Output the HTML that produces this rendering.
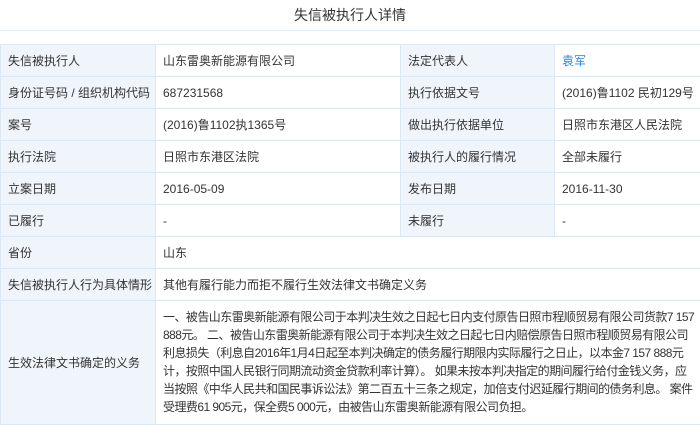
<!DOCTYPE html>
<html><head><meta charset="utf-8"><style>
*{margin:0;padding:0;box-sizing:border-box}
body{width:700px;height:412px;overflow:hidden;background:#fff;font-family:"Liberation Sans","Noto Sans CJK SC",sans-serif;font-size:12px;color:#333}
.title{height:31px;border-bottom:1px solid #e8eef5;text-align:center;font-size:14px;line-height:30px;color:#333}
table{position:absolute;top:44px;left:0;width:702px;border-collapse:collapse;table-layout:fixed}
td{border:1px solid #dce8f4;height:32px;padding:0 7px;vertical-align:middle;white-space:nowrap;overflow:hidden}
td.l{background:#f0f5fb}
a{color:#1e88e5;text-decoration:none}
td.long{line-height:18px;padding-top:7px;vertical-align:top;height:124px;letter-spacing:-0.55px}
</style></head><body>
<div class="title">失信被执行人详情</div>
<table>
<col style="width:155px"><col style="width:245px"><col style="width:154px"><col style="width:148px">
<tr><td class="l">失信被执行人</td><td>山东雷奥新能源有限公司</td><td class="l">法定代表人</td><td><a>袁军</a></td></tr>
<tr><td class="l">身份证号码 / 组织机构代码</td><td>687231568</td><td class="l">执行依据文号</td><td>(2016)鲁1102 民初129号</td></tr>
<tr><td class="l">案号</td><td>(2016)鲁1102执1365号</td><td class="l">做出执行依据单位</td><td>日照市东港区人民法院</td></tr>
<tr><td class="l">执行法院</td><td>日照市东港区法院</td><td class="l">被执行人的履行情况</td><td>全部未履行</td></tr>
<tr><td class="l">立案日期</td><td>2016-05-09</td><td class="l">发布日期</td><td>2016-11-30</td></tr>
<tr><td class="l">已履行</td><td>-</td><td class="l">未履行</td><td>-</td></tr>
<tr><td class="l">省份</td><td colspan="3">山东</td></tr>
<tr><td class="l">失信被执行人行为具体情形</td><td colspan="3">其他有履行能力而拒不履行生效法律文书确定义务</td></tr>
<tr><td class="l" style="height:124px;padding-bottom:0">生效法律文书确定的义务</td><td colspan="3" class="long">一、被告山东雷奥新能源有限公司于本判决生效之日起七日内支付原告日照市程顺贸易有限公司货款7 157<br>888元。 二、被告山东雷奥新能源有限公司于本判决生效之日起七日内赔偿原告日照市程顺贸易有限公司<br>利息损失（利息自2016年1月4日起至本判决确定的债务履行期限内实际履行之日止，以本金7 157 888元<br>计，按照中国人民银行同期流动资金贷款利率计算）。 如果未按本判决指定的期间履行给付金钱义务，应<br>当按照《中华人民共和国民事诉讼法》第二百五十三条之规定，加倍支付迟延履行期间的债务利息。 案件<br>受理费61 905元，保全费5 000元，由被告山东雷奥新能源有限公司负担。</td></tr>
</table>
</body></html>
